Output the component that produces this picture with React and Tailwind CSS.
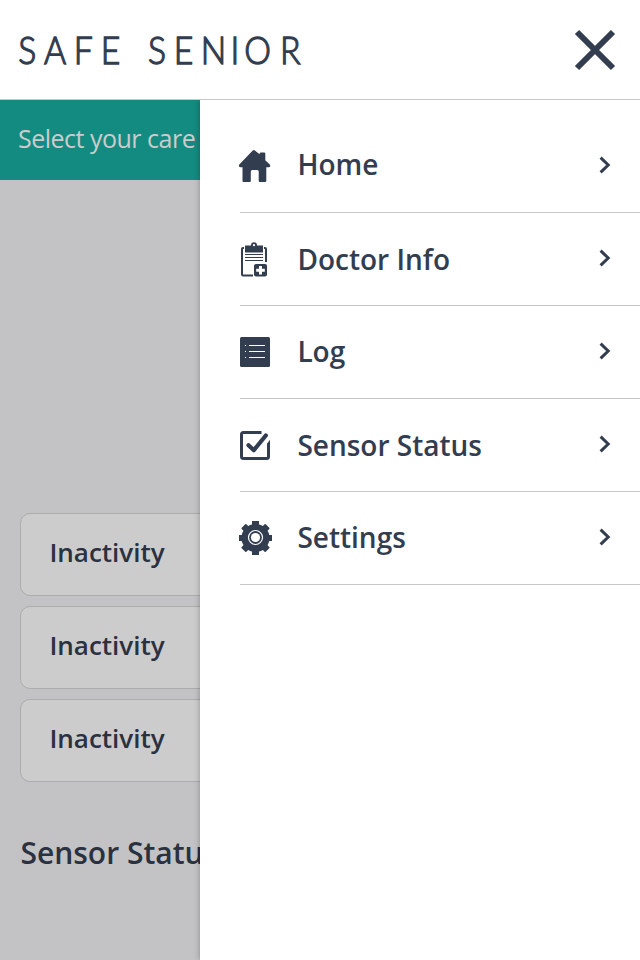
import React from "react";

const navy = "#333d50";

function HomeIcon() {
  return (
    <svg width="34" height="36" viewBox="0 0 34 36" fill={navy}>
      <path d="M15 2.8Q16.2 1.4 17.4 2.4L22 6.3V5.8Q22.3 4.5 23.3 4.5H26.7Q27.8 4.5 27.8 5.6V12.2L32.3 16.6Q33.6 19 31 19.3H28.8V33Q28.8 34 27.7 34H22.2Q21.2 34 21.2 33V23.5Q21.2 22 19.7 22H14.8Q13.3 22 13.3 23.5V33Q13.3 34 12.3 34H6Q5 34 5 33V19.3H3.2Q.6 19 1.6 16.8Z" transform="translate(-1.5 0)" />
    </svg>
  );
}

function DoctorIcon() {
  return (
    <svg width="34" height="36" viewBox="0 0 34 36" fill="none">
      <path d="M5 6H4Q3 6 3 7V32.6Q3 33.6 4 33.6H14M25 6H26Q27 6 27 7V20" stroke={navy} strokeWidth="2" />
      <path d="M6 3.5H12Q12 .3 15 .3T18 3.5H24V10.5H6Z" fill={navy} />
      <circle cx="15" cy="3.2" r="1.1" fill="#fff" />
      <path d="M6 12.5H24M6 15.5H24M6 18.5H24" stroke={navy} strokeWidth="1" />
      <rect x="15" y="22" width="13" height="12.6" rx="2" fill={navy} />
      <path d="M21.5 24V32.6M17.2 28.3H25.8" stroke="#fff" strokeWidth="3" />
    </svg>
  );
}

function LogIcon() {
  return (
    <svg width="34" height="36" viewBox="0 0 34 36">
      <rect x="1" y="3" width="30" height="30" rx="1.5" fill={navy} />
      <path d="M10 11.5H26M10 17.5H26M10 23.5H26M6 11.5H7M6 17.5H7M6 23.5H7" stroke="#fff" strokeWidth="1" />
    </svg>
  );
}

function CheckIcon() {
  return (
    <svg width="34" height="36" viewBox="0 0 34 36" fill="none" stroke={navy}>
      <path d="M22.5 3.5H4.5Q2.5 3.5 2.5 5.5V27.5Q2.5 29.5 4.5 29.5H27.5Q29.5 29.5 29.5 27.5V14.5" strokeWidth="3" />
      <path d="M28 14.8L31 10.8V15H28Z" fill={navy} stroke="none" />
      <path d="M9.5 16.2L14.8 21.2L26.8 6.5" strokeWidth="4.2" strokeLinecap="round" strokeLinejoin="round" />
    </svg>
  );
}

function GearIcon() {
  return (
    <svg width="34" height="36" viewBox="0 0 34 36">
      <g fill={navy}>
        <circle cx="16.5" cy="18" r="14" />
        <rect x="13" y="1" width="7" height="34" />
        <rect x="0" y="15" width="33" height="6" />
        <rect x="13.2" y="1" width="6.6" height="34" rx=".8" transform="rotate(45 16.5 18)" />
        <rect x="13.2" y="1" width="6.6" height="34" rx=".8" transform="rotate(-45 16.5 18)" />
      </g>
      <circle cx="16.5" cy="17.5" r="7" fill="none" stroke="#fff" strokeWidth="1.2" />
      <circle cx="16.5" cy="17.5" r="4.6" fill="#fff" />
    </svg>
  );
}

const items = [
  { label: "Home", Icon: HomeIcon, icon: "mt-[28px]", text: "mt-[24px]" },
  { label: "Doctor Info", Icon: DoctorIcon, icon: "mt-[29px]", text: "mt-[26px]" },
  { label: "Log", Icon: LogIcon, icon: "mt-[28px]", text: "mt-[25px]" },
  { label: "Sensor Status", Icon: CheckIcon, icon: "mt-[30px]", text: "mt-[26px]" },
  { label: "Settings", Icon: GearIcon, icon: "mt-[28px]", text: "mt-[25px]" },
];

function MenuItem({ label, Icon, icon, text }) {
  return (
    <a className="flex h-[93px] items-start border-b border-[#c8c8c8]">
      <span className={`-ml-px block w-[58.4px] shrink-0 ${icon}`}><Icon /></span>
      <span className={`flex-1 whitespace-nowrap text-[28px] leading-[40px] font-semibold ${text}`}>{label}</span>
      <svg className="mt-[35px] mr-[27px]" width="16" height="20" viewBox="0 0 16 20" fill="none" stroke={navy} strokeWidth="3">
        <path d="M3.6 2.7L11.2 10L3.6 17.3" />
      </svg>
    </a>
  );
}

export default function App() {
  return (
    <div className="flex h-[960px] w-[640px] flex-col overflow-hidden bg-white font-['Open_Sans',sans-serif] text-[#333d50]">
      <header className="z-10 flex h-[100px] shrink-0 items-center justify-between border-b border-[#c8c8c8] bg-white pr-[24px]">
        <svg width="320" height="60" viewBox="0 0 320 60" fill={navy}>
          <text className="font-['Lato',sans-serif] text-[37.5px] font-light" stroke={navy} strokeWidth="1.3" transform="translate(0 44) scale(.9 1)" x="20.3 49 82 112 164.5 193 223 256 271.5 311">SAFESENIOR</text>
        </svg>
        <svg width="42" height="42" viewBox="0 0 42 42" fill="none" stroke={navy} strokeWidth="6">
          <path d="M3 3L39 39M39 3L3 39" />
        </svg>
      </header>
      <div className="flex min-h-0 flex-1">
        <main className="w-[200px] shrink-0 overflow-hidden whitespace-nowrap bg-[#c3c3c5] text-[#2a3140]">
          <div className="h-[80px] bg-[#148b80] pt-[20px] pl-[18px] text-[25px] leading-[36px] tracking-[-0.5px] text-[#cccccc]">Select your care</div>
          <div className="mt-[333px] flex w-[600px] flex-col gap-[10px] pl-[20px] font-semibold">
            <div className="h-[83px] rounded-[10px] border border-[#acacac] bg-[#cccccc] pt-[19px] pl-[28.4px] text-[26px] leading-[38px]">Inactivity</div>
            <div className="h-[83px] rounded-[10px] border border-[#acacac] bg-[#cccccc] pt-[19px] pl-[28.4px] text-[26px] leading-[38px]">Inactivity</div>
            <div className="h-[83px] rounded-[10px] border border-[#acacac] bg-[#cccccc] pt-[19px] pl-[28.4px] text-[26px] leading-[38px]">Inactivity</div>
          </div>
          <h2 className="mt-[50px] pl-[20.4px] text-[30px] leading-[42px] font-semibold">Sensor Status</h2>
        </main>
        <nav className="flex-1 bg-white pt-[20px] pl-[40px] shadow-[0_0_6px_rgba(0,0,0,0.3)]">
          {items.map((item) => <MenuItem key={item.label} {...item} />)}
        </nav>
      </div>
    </div>
  );
}
